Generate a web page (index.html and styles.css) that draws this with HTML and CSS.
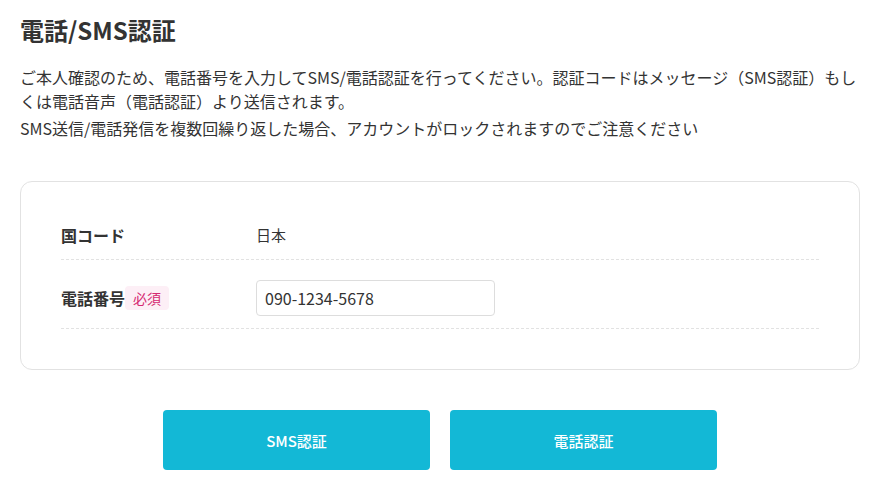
FILE: index.html
```html
<!DOCTYPE html>
<html lang="ja">
<head>
<meta charset="utf-8">
<link rel="stylesheet" href="styles.css">
</head>
<body>
<main class="page">
  <h1 class="title">電話/SMS認証</h1>
  <p class="lead">ご本人確認のため、電話番号を入力してSMS/電話認証を行ってください。認証コードはメッセージ（SMS認証）もしくは電話音声（電話認証）より送信されます。</p>
  <p class="lead lead-2">SMS送信/電話発信を複数回繰り返した場合、アカウントがロックされますのでご注意ください</p>

  <section class="card">
    <div class="row row-first">
      <div class="label">国コード</div>
      <div class="value">日本</div>
    </div>
    <div class="row row-input">
      <div class="label">電話番号<span class="badge">必須</span></div>
      <div class="value"><input class="input" type="text" value="090-1234-5678"></div>
    </div>
  </section>

  <div class="actions">
    <button class="btn" type="button">SMS認証</button>
    <button class="btn" type="button">電話認証</button>
  </div>
</main>
</body>
</html>
```
FILE: styles.css
```css
html, body {
  margin: 0;
  padding: 0;
  background: #ffffff;
}
body {
  font-family: "Noto Sans CJK JP", "Noto Sans", sans-serif;
  color: #333333;
}
.page {
  width: 840px;
  margin-left: 20px;
  padding-top: 14px;
}
.title {
  margin: 0;
  font-size: 24px;
  line-height: 32px;
  font-weight: 700;
  color: #333333;
}
.lead {
  margin: 19px 0 0;
  font-size: 16px;
  line-height: 24px;
  color: #333333;
}
.lead-2 {
  margin-top: 3px;
}
.card {
  margin-top: 41px;
  border: 1px solid #e2e2e2;
  border-radius: 12px;
  padding: 29px 40px 40px;
}
.row {
  display: flex;
  align-items: center;
  border-bottom: 1px dashed #e2e2e2;
  font-size: 15px;
  line-height: 24px;
}
.row-first {
  padding: 12px 0;
}
.row-input {
  padding: 20px 0 12px;
}
.label {
  width: 195px;
  flex: none;
  font-size: 16px;
  font-weight: 700;
  display: flex;
  align-items: center;
}
.badge {
  margin-left: 0;
  display: inline-block;
  width: 44px;
  height: 24px;
  line-height: 24px;
  text-align: center;
  font-size: 14px;
  font-weight: 400;
  color: #d52a72;
  background: #fdeff6;
  border-radius: 4px;
}
.value {
  color: #333333;
}
.input {
  box-sizing: border-box;
  width: 239px;
  height: 36px;
  border: 1px solid #dddddd;
  border-radius: 4px;
  padding: 0 8px;
  font-family: "Noto Sans CJK JP", "Noto Sans", sans-serif;
  font-size: 16px;
  color: #333333;
  outline: none;
  display: block;
}
.actions {
  margin-top: 40px;
  display: flex;
  justify-content: center;
  gap: 20px;
}
.btn {
  width: 267px;
  height: 60px;
  border: none;
  border-radius: 4px;
  background: #13b8d6;
  color: #ffffff;
  font-family: "Noto Sans CJK JP", "Noto Sans", sans-serif;
  font-size: 15px;
  font-weight: 500;
  cursor: pointer;
}
```
